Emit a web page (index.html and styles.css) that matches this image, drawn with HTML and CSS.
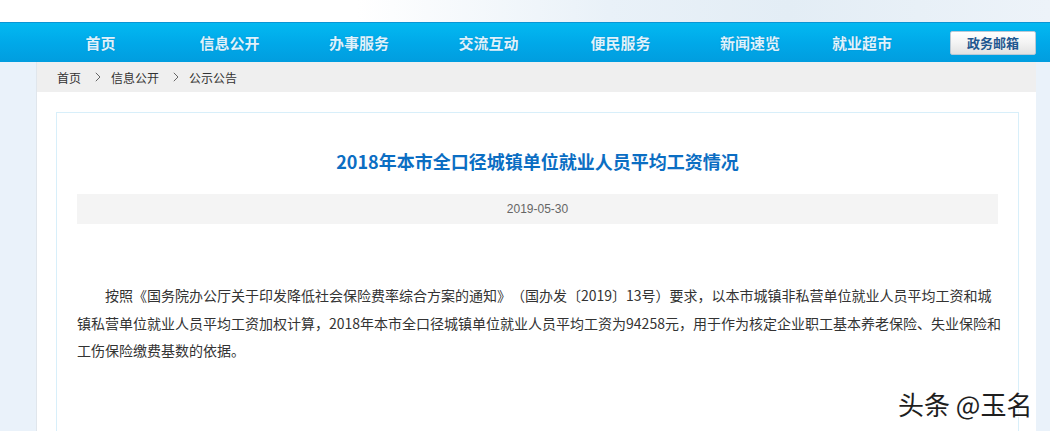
FILE: index.html
```html
<!DOCTYPE html>
<html lang="zh-CN">
<head>
<meta charset="utf-8">
<title>2018年本市全口径城镇单位就业人员平均工资情况</title>
<link rel="stylesheet" href="styles.css">
</head>
<body>
<div class="top"></div>
<div class="nav">
  <div class="nav-inner">
    <ul class="menu">
      <li>首页</li>
      <li>信息公开</li>
      <li>办事服务</li>
      <li>交流互动</li>
      <li>便民服务</li>
      <li>新闻速览</li>
      <li>就业超市</li>
    </ul>
    <a class="mail-btn">政务邮箱</a>
  </div>
</div>
<div class="main">
  <div class="crumbs">
    <span>首页</span>
    <svg class="sep" width="6" height="10" viewBox="0 0 6 10"><path d="M0.8 0.8 L5 5 L0.8 9.2" fill="none" stroke="#666" stroke-width="1"/></svg>
    <span>信息公开</span>
    <svg class="sep" width="6" height="10" viewBox="0 0 6 10"><path d="M0.8 0.8 L5 5 L0.8 9.2" fill="none" stroke="#666" stroke-width="1"/></svg>
    <span>公示公告</span>
  </div>
  <div class="content">
    <div class="article">
      <h1 class="title">2018年本市全口径城镇单位就业人员平均工资情况</h1>
      <div class="date">2019-05-30</div>
      <p class="body-text">按照《国务院办公厅关于印发降低社会保险费率综合方案的通知》（国办发〔2019〕13号）要求，以本市城镇非私营单位就业人员平均工资和城镇私营单位就业人员平均工资加权计算，2018年本市全口径城镇单位就业人员平均工资为94258元，用于作为核定企业职工基本养老保险、失业保险和工伤保险缴费基数的依据。</p>
    </div>
  </div>
</div>
<div class="watermark">头条 @玉名</div>
</body>
</html>
```

FILE: styles.css
```css
* { box-sizing: border-box; }
html, body { margin: 0; padding: 0; }
body {
  background: #eaf2fa;
  font-family: "Noto Sans CJK SC", "Noto Sans", sans-serif;
  color: #333;
  height: 431px;
  overflow: hidden;
  position: relative;
  text-spacing-trim: space-all;
}
.top {
  height: 22px;
  background: linear-gradient(90deg, #ffffff 0%, #ffffff 34%, #e9f1f8 58%, #e3edf5 75%, #edf3f9 100%);
}
.nav {
  height: 40px;
  border-top: 1px solid #0a95d5;
  background: linear-gradient(#03b9f1, #00a9e9 50%, #019ddf);
}
.nav-inner {
  margin-left: 36px;
  width: 1000px;
  height: 39px;
  display: flex;
  align-items: center;
}
.menu {
  list-style: none;
  margin: 0;
  padding: 0;
  display: grid;
  grid-template-columns: 129px 129px 130px 129px 135px 124px 100px;
  height: 39px;
  align-items: center;
}
.menu li {
  text-align: center;
  font-size: 15px;
  font-weight: bold;
  color: #def2fc;
  text-shadow: 0 0 1px rgba(0, 90, 160, 0.5);
  line-height: 20px;
  padding-top: 1px;
}
.mail-btn {
  margin-left: auto;
  width: 86px;
  height: 24px;
  border: 1px solid #b9c9d6;
  border-radius: 2px;
  background: linear-gradient(#ffffff, #f3f3f3 50%, #e2e2e2);
  color: #1f5790;
  font-size: 13px;
  font-weight: bold;
  display: flex;
  align-items: center;
  justify-content: center;
}
.main {
  margin-left: 36px;
  width: 1000px;
  background: #fff;
  border-left: 1px solid #e0e6ec;
  height: 369px;
}
.crumbs {
  height: 30px;
  background: #efefef;
  padding-left: 20px;
  display: flex;
  align-items: center;
  font-size: 12px;
  color: #333;
}
.sep { margin: 0 10px 0 14px; }
.content {
  padding: 20px 17px 0 19px;
}
.article {
  border: 1px solid #d8effa;
  border-bottom: none;
  padding: 34px 20px 0 20px;
  height: 319px;
}
.title {
  margin: 0;
  text-align: center;
  font-size: 18px;
  font-weight: bold;
  line-height: 28px;
  color: #0b6ec3;
}
.date {
  margin-top: 19px;
  height: 30px;
  background: #f4f4f4;
  text-align: center;
  font-family: "Liberation Sans", Arial, sans-serif;
  font-size: 12px;
  line-height: 30px;
  color: #666;
}
.body-text {
  margin: 58px -6px 0 0;
  font-size: 14px;
  line-height: 27.5px;
  text-indent: 2em;
  color: #333;
}
.watermark {
  position: absolute;
  left: 898px;
  top: 386px;
  font-size: 26px;
  line-height: 36px;
  color: #1e1e1e;
  text-shadow: 1px 1px 0 #fff, -1px -1px 0 #fff, 1px -1px 0 #fff, -1px 1px 0 #fff;
  white-space: nowrap;
}
```
